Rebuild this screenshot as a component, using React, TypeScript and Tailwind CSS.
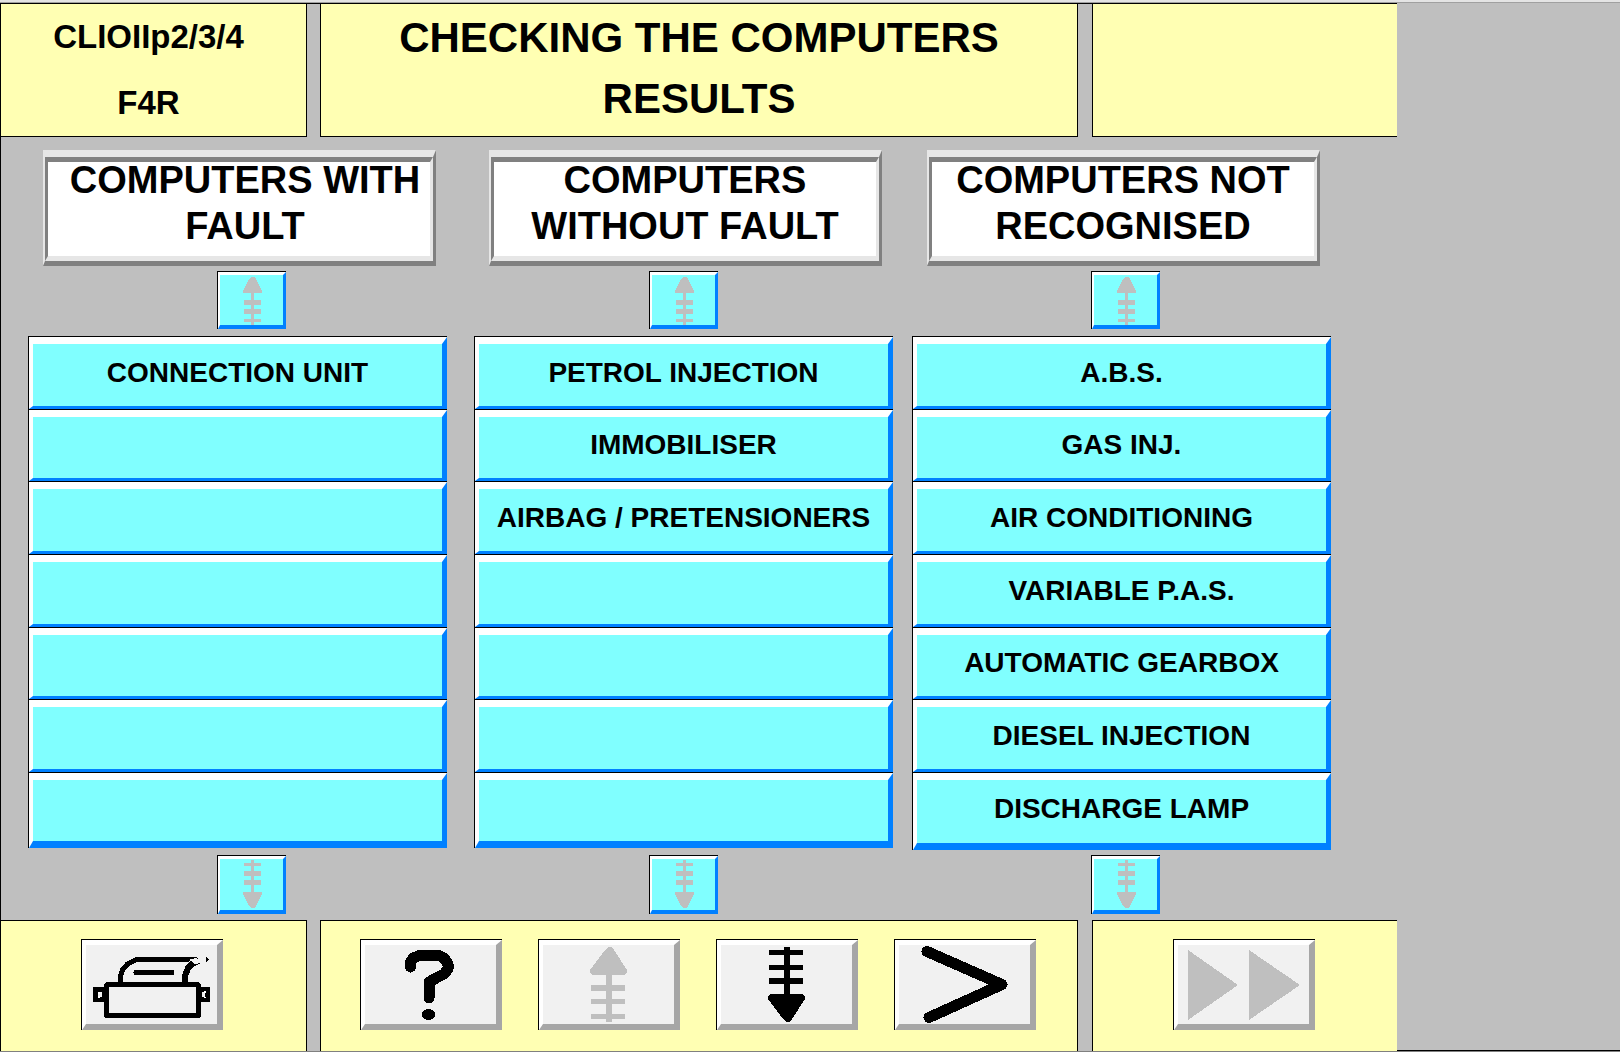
import type { ReactNode } from 'react';
import clsx from 'clsx';

type Column = {
    id: string;
    title: string[];
    items: string[];
    columnClass: string;
    titleClass: string;
    scrollClass: string;
    listClass: string;
};

const ROWS = 7;

const columns: Column[] = [
    {
        id: "fault",
        title: ["COMPUTERS WITH", "FAULT"],
        items: ["CONNECTION UNIT"],
        columnClass: "pr-[27px]",
        titleClass: "pl-3",
        scrollClass: "pl-7",
        listClass: "grid-rows-[repeat(6,1fr)_76px] mb-[7px]",
    },
    {
        id: "no-fault",
        title: ["COMPUTERS", "WITHOUT FAULT"],
        items: ["PETROL INJECTION", "IMMOBILISER", "AIRBAG / PRETENSIONERS"],
        columnClass: "pr-[19px]",
        titleClass: "",
        scrollClass: "",
        listClass: "grid-rows-[repeat(6,1fr)_76px] mb-[7px]",
    },
    {
        id: "unknown",
        title: ["COMPUTERS NOT", "RECOGNISED"],
        items: [
            "A.B.S.",
            "GAS INJ.",
            "AIR CONDITIONING",
            "VARIABLE P.A.S.",
            "AUTOMATIC GEARBOX",
            "DIESEL INJECTION",
            "DISCHARGE LAMP",
        ],
        columnClass: "",
        titleClass: "",
        scrollClass: "pl-[7px]",
        listClass: "grid-rows-[repeat(6,1fr)_78px] mb-[5px]",
    },
];

const SmallArrow = ({ down }: { down?: boolean }) => (
    <svg
        viewBox="0 0 63 50"
        className={clsx("w-[63px] h-[50px] fill-[#bfbfbf]", down && "-scale-y-100")}
        shapeRendering="crispEdges"
    >
        <path d="M31 2h3l2 2 6 12v2H23v-2l6-12z" />
        <path d="M31 17h3v33h-3zM24 25h17v5H24zM24 34h17v5H24zM24 44h17v3H24z" />
    </svg>
);

const LargeArrow = ({ down }: { down?: boolean }) => (
    <svg
        viewBox="0 0 131 79"
        className={clsx("w-[131px] h-[79px]", down ? "-scale-y-100 fill-black" : "fill-[#bfbfbf]")}
        shapeRendering="crispEdges"
    >
        <path d="M65 2h3l3 3 13 20v2l-2 3H49l-2-3v-2L62 5z" />
        <path d="M63 28h6v49h-6zM48 40h34v6H48zM48 54h34v5H48zM48 69h34v5H48z" />
    </svg>
);

const PrinterIcon = () => (
    <svg viewBox="0 0 131 79" className="w-[131px] h-[79px]" fill="none" stroke="#000" strokeWidth="5" shapeRendering="crispEdges">
        <path d="M34.500 38v-7l2-6 5-6 9-4.500h50" strokeLinejoin="round" />
        <path d="M96 12h16l-5 2h-2l-3 3h-6z" fill="#000" stroke="none" />
        <path d="M99 38v-7l3-8 4-4 7-3" strokeWidth="6" />
        <path d="M103 14h10l2 4-6 1z" fill="#f1f1f1" stroke="none" />
        <path d="M120 12l3 2v1l-3 2z" fill="#000" stroke="none" />
        <path d="M50 27.500h36" strokeLinecap="round" />
        <rect x="20.500" y="39.500" width="92" height="31" rx="1" />
        <rect x="9.500" y="44.500" width="9" height="10" />
        <rect x="113.500" y="44.500" width="8" height="10" />
        <path d="M12 47h2v2h-2zM12 51h2v2h-2zM118 46h2v2h-2zM118 52h2v1h-2z" fill="#fff" stroke="none" />
    </svg>
);

const HelpIcon = () => (
    <svg viewBox="0 0 131 79" className="w-[131px] h-[79px]" fill="none" stroke="#000" strokeWidth="11" shapeRendering="crispEdges">
        <path d="M45.500 22v-5l3-4 7-3H73l6 3 4 6v5l-4 5-6 3-9 5v16" strokeLinecap="round" strokeLinejoin="round" />
        <ellipse cx="63.500" cy="69.500" rx="6.500" ry="5.500" fill="#000" stroke="none" />
    </svg>
);

const NextIcon = () => (
    <svg viewBox="0 0 131 79" className="w-[131px] h-[79px]" fill="none" stroke="#000" strokeWidth="11" shapeRendering="crispEdges">
        <path d="M28 6.500l75 33L30 72.500" strokeLinecap="round" strokeLinejoin="round" />
    </svg>
);

const FastForwardIcon = () => (
    <svg viewBox="0 0 131 79" className="w-[131px] h-[79px] fill-[#bfbfbf]" shapeRendering="crispEdges">
        <path d="M10 5l50 35-50 35zM71 5l51 35-51 35z" />
    </svg>
);

const ScrollButton = ({ label, down }: { label: string; down?: boolean }) => (
    <button type="button" aria-label={label} className="block border-t border-l border-black">
        <span
            className={clsx(
                "block bg-[#80ffff] border-t-3 border-l-2 border-r-3 border-b-4 border-t-white border-l-white border-r-[#0080ff] border-b-[#0080ff]",
                down && "pt-px"
            )}
        >
            <SmallArrow down={down} />
        </span>
    </button>
);

const ToolButton = ({ label, children }: { label: string; children: ReactNode }) => (
    <button type="button" aria-label={label} className="block border-t border-l border-black">
        <span className="block bg-[#f1f1f1] border-t-5 border-l-4 border-r-6 border-b-6 border-t-white border-l-white border-r-[#a6a6a6] border-b-[#a6a6a6]">
            {children}
        </span>
    </button>
);

const ComputerRow = ({ name, last }: { name?: string; last: boolean }) => (
    <li className="flex border-t border-l border-black">
        <button
            type="button"
            disabled={!name}
            className={clsx(
                "flex-1 pb-1 bg-[#80ffff] text-[28px] leading-8 font-bold whitespace-nowrap border-t-7 border-l-4 border-r-5 border-t-white border-l-white border-r-[#0080ff] border-b-[#0080ff]",
                last ? "border-b-7" : "border-b-3"
            )}
        >
            {name}
        </button>
    </li>
);

const ComputerColumn = ({ column }: { column: Column }) => (
    <section className={clsx("flex flex-col", column.columnClass)}>
        {/* Double bevel: raised outer edge, sunken inner edge */}
        <div className="ml-[15px] mr-[11px] border-t-7 border-l-2 border-r-3 border-b-5 border-t-[#e6e6e6] border-l-[#e6e6e6] border-r-[#808080] border-b-[#808080]">
            <div className="h-[104px] bg-white border-t-5 border-l-3 border-r-3 border-b-5 border-t-[#808080] border-l-[#808080] border-r-[#e6e6e6] border-b-[#e6e6e6]">
                <h2 className={clsx("-mt-[5px] text-[38px] leading-[46px] font-bold text-center whitespace-nowrap", column.titleClass)}>
                    {column.title.map((line) => (
                        <span key={line} className="block">{line}</span>
                    ))}
                </h2>
            </div>
        </div>
        <div className={clsx("flex justify-center mt-[5px] mb-[7px]", column.scrollClass)}>
            <ScrollButton label="Scroll up" />
        </div>
        <ul className={clsx("grid flex-1", column.listClass)}>
            {Array.from({ length: ROWS }, (_, i) => (
                <ComputerRow key={i} name={column.items[i]} last={i === ROWS - 1} />
            ))}
        </ul>
        <div className={clsx("flex justify-center", column.scrollClass)}>
            <ScrollButton label="Scroll down" down />
        </div>
    </section>
);

const App = () => {
    return (
        <div className="flex flex-col min-h-screen bg-[#bfbfbf] text-black font-['Liberation_Sans',Arial,sans-serif]">
            <div className="h-[3px] bg-[#e4e4e4] border-b border-[#a0a0a0]"></div>
            <div className="flex flex-1">
                <div className="flex flex-col flex-1 border-t border-l border-black">
                    {/* Header */}
                    <header className="grid grid-cols-[306fr_758fr_306fr] gap-[13px] h-[133px] font-bold text-center whitespace-nowrap">
                        <div className="bg-[#ffffb3] border-r border-b border-black pr-[10px] text-[33px] leading-[66px]">
                            <p>CLIOIIp2/3/4</p>
                            <p>F4R</p>
                        </div>
                        <h1 className="bg-[#ffffb3] border-x border-b border-black pt-[3px] text-[42px] leading-[61px]">
                            <span className="block">CHECKING THE COMPUTERS</span>
                            <span className="block">RESULTS</span>
                        </h1>
                        <div className="ml-px bg-[#ffffb3] border-l border-b border-black"></div>
                    </header>

                    {/* Result lists */}
                    <main className="grid flex-1 grid-cols-[446fr_438fr_419fr] pt-[13px] pb-[6px] pl-[27px] pr-[66px]">
                        {columns.map((column) => (
                            <ComputerColumn key={column.id} column={column} />
                        ))}
                    </main>

                    {/* Toolbar */}
                    <footer className="grid grid-cols-[306fr_758fr_306fr] gap-[13px]">
                        <div className="flex justify-center bg-[#ffffb3] border-t border-r border-black pt-[18px] pb-[21px] pr-[3px]">
                            <ToolButton label="Print"><PrinterIcon /></ToolButton>
                        </div>
                        <div className="flex justify-between bg-[#ffffb3] border-t border-x border-black pt-[18px] pb-[21px] pl-[39px] pr-[41px]">
                            <ToolButton label="Help"><HelpIcon /></ToolButton>
                            <ToolButton label="Page up"><LargeArrow /></ToolButton>
                            <ToolButton label="Page down"><LargeArrow down /></ToolButton>
                            <ToolButton label="Next"><NextIcon /></ToolButton>
                        </div>
                        <div className="flex justify-center ml-px bg-[#ffffb3] border-t border-l border-black pt-[18px] pb-[21px] pr-[3px]">
                            <ToolButton label="Fast forward"><FastForwardIcon /></ToolButton>
                        </div>
                    </footer>
                </div>
                <aside className="w-[223px] border-b border-black"></aside>
            </div>
            <div className="h-[2px] bg-white border-t border-[#808080]"></div>
        </div>
    );
};

export default App;
